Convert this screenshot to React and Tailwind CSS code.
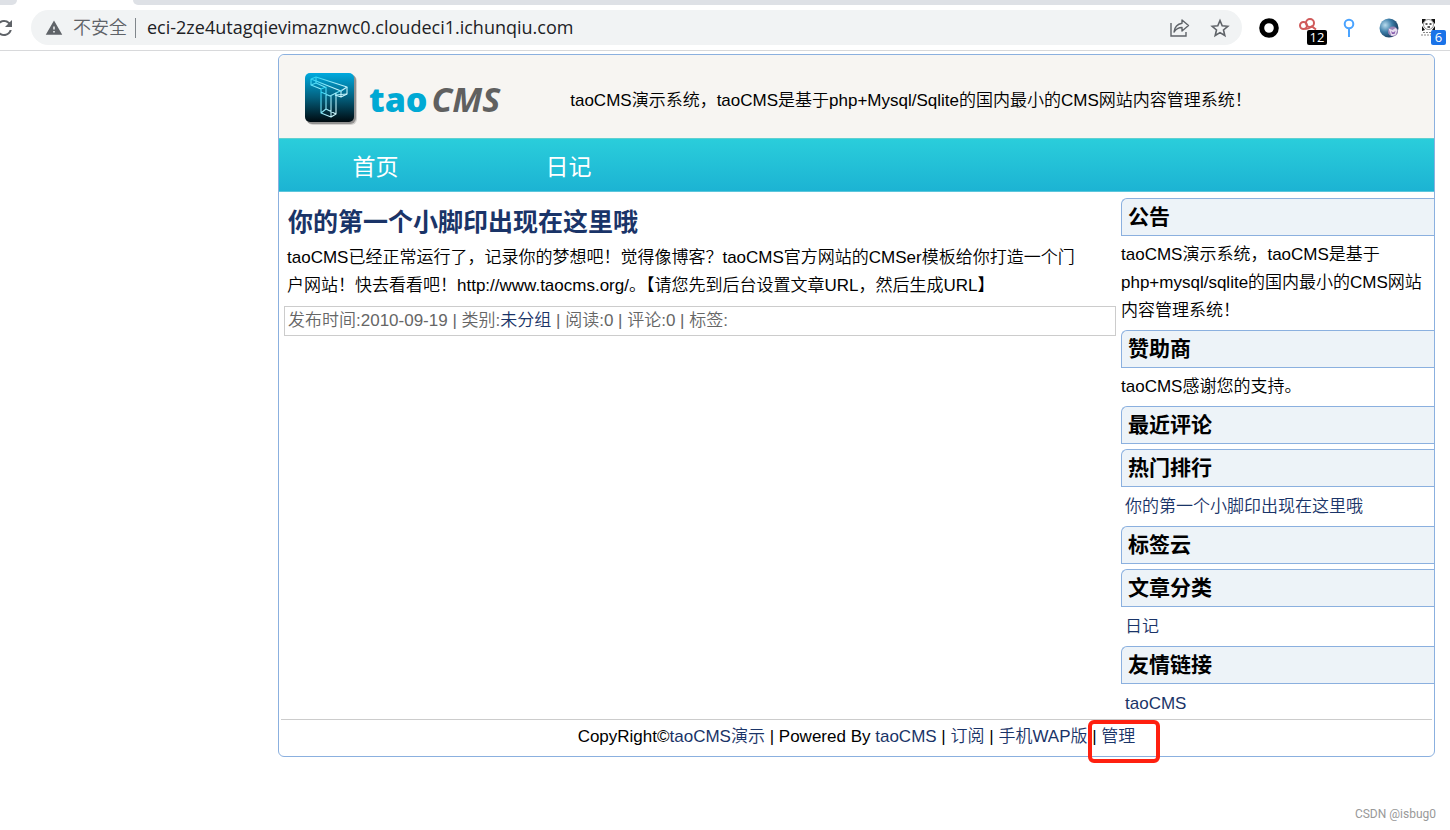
import React from "react";
import { MdRefresh, MdWarning } from "react-icons/md";

const sections = [
  { title: "公告", text: "taoCMS演示系统，taoCMS是基于php+mysql/sqlite的国内最小的CMS网站内容管理系统！" },
  { title: "赞助商", text: "taoCMS感谢您的支持。" },
  { title: "最近评论" },
  { title: "热门排行", links: ["你的第一个小脚印出现在这里哦"] },
  { title: "标签云" },
  { title: "文章分类", links: ["日记"] },
  { title: "友情链接", links: ["taoCMS"] },
];

const Badge = ({ children, className }) => (
  <span
    className={`absolute top-[12px] h-[15px] text-center text-[13px] leading-[15px] font-medium text-white ${className}`}
  >
    {children}
  </span>
);

const ShareIcon = () => (
  <svg width="20" height="20" viewBox="0 0 20 20" fill="none" stroke="#5f6368" strokeWidth="1.4">
    <path d="M1 5v13h15v-4" />
    <path d="M12 2l6.5 5.5L12 13v-3.500C8.500 9.500 6 11 4 14c.6-4.500 3.500-8 8-8.700z" strokeLinejoin="round" />
  </svg>
);

const StarIcon = () => (
  <svg width="20" height="20" viewBox="0 0 20 20" fill="none" stroke="#5f6368" strokeWidth="1.600">
    <path d="M10 2.500l2.200 5.300 5.600.5-4.300 3.700 1.300 5.500-4.800-2.900-4.800 2.900 1.300-5.500-4.300-3.700 5.600-.5z" />
  </svg>
);

const Extensions = () => (
  <div className="flex items-center gap-5 font-['Open_Sans',sans-serif]">
    <button aria-label="Ring" className="size-5">
      <svg width="20" height="20" viewBox="0 0 20 20">
        <circle cx="10" cy="10" r="7.300" fill="#fff" stroke="#000" strokeWidth="5" />
      </svg>
    </button>
    <button aria-label="Links" className="relative size-5">
      <svg width="20" height="20" viewBox="0 0 20 20" fill="none" stroke="#d05a5a" strokeWidth="2">
        <circle cx="4.500" cy="7.500" r="3.500" />
        <circle cx="11" cy="5" r="4" />
        <path d="M6 10.500c3 1 5-1 7-2l4 3" />
      </svg>
      <Badge className="left-2 w-5 rounded-xs bg-black">12</Badge>
    </button>
    <button aria-label="Pin" className="size-5">
      <svg width="20" height="20" viewBox="0 0 20 20" fill="none" stroke="#4aa3ff" strokeWidth="2">
        <circle cx="10" cy="6" r="4.300" />
        <path d="M10 10v9" />
      </svg>
    </button>
    <button aria-label="Globe" className="size-5">
      <svg width="20" height="20" viewBox="0 0 20 20">
        <defs>
          <radialGradient id="globe" cx="0.3" cy="0.35" r="0.8">
            <stop offset="0" stopColor="#b9dcee" />
            <stop offset="0.45" stopColor="#3d7ea8" />
            <stop offset="1" stopColor="#0d2c4c" />
          </radialGradient>
        </defs>
        <circle cx="10" cy="10" r="9.500" fill="url(#globe)" />
        <circle cx="14" cy="13.500" r="5" fill="#9c86b8" />
        <path d="M9.500 10.500l4 1.500 3-2 2 2-2 5-4 1z" fill="#e6dcee" />
        <path d="M12 13l2 1.500 2.500-1.500-1 3h-2.500z" fill="#8a5fb0" />
      </svg>
    </button>
    <button aria-label="Panda" className="relative size-5">
      <svg width="20" height="20" viewBox="0 0 20 20">
        <path d="M3 1h4l-3 4-1 1zM16 1h-4l3 4 1 1zM3 8l3 4-3 1zM16 8l-3 4 3 1z" fill="#111" />
        <circle cx="9.500" cy="6.500" r="5" fill="#fff" stroke="#444" strokeWidth="0.600" />
        <path d="M6.500 6h2M10.500 6h2M8.500 9h2.500" stroke="#222" strokeWidth="1.300" />
        <path d="M4 14.500h9M2 17h12" stroke="#888" strokeDasharray="2 1" strokeWidth="1" />
      </svg>
      <Badge className="left-3 w-[15px] rounded-xs bg-[#1a73e8]">6</Badge>
    </button>
  </div>
);

const BrowserBar = () => (
  <div className="border-b border-[#d8d9db]">
    <div className="flex h-[5px] justify-between">
      <div className="w-[17px] rounded-br-lg bg-[#dee1e6]" />
      <div className="ml-[116px] flex-1 rounded-bl-lg bg-[#dee1e6]" />
    </div>
    <div className="flex h-[45px] items-center pr-[11px]">
      <button aria-label="Reload" className="-ml-2 mr-[15px] text-[#5f6368]">
        <MdRefresh size={24} />
      </button>
      <div className="flex h-[35px] flex-1 items-center rounded-full bg-[#f1f3f4] pl-[14px] pr-3 mr-[17px] text-[18px] font-['Open_Sans','Noto_Sans_CJK_SC',sans-serif]">
        <MdWarning size={18} className="text-[#5f6368]" />
        <span className="ml-[10px] font-[350] text-[#5f6368]">不安全</span>
        <span className="mx-2 h-5 w-px bg-[#80868b]" />
        <input
          aria-label="Address"
          className="min-w-0 flex-1 bg-transparent pl-[3px] text-[#202124] outline-none"
          defaultValue="eci-2ze4utagqievimaznwc0.cloudeci1.ichunqiu.com"
        />
        <button aria-label="Share" className="mr-5">
          <ShareIcon />
        </button>
        <button aria-label="Bookmark">
          <StarIcon />
        </button>
      </div>
      <Extensions />
    </div>
  </div>
);

const Logo = () => (
  <a href="#" className="flex items-center">
    <svg width="54" height="56" viewBox="0 0 54 56">
      <defs>
        <linearGradient id="tile" x1="0" y1="0" x2="0" y2="1">
          <stop offset="0" stopColor="#00aadf" />
          <stop offset="0.5" stopColor="#03607e" />
          <stop offset="1" stopColor="#000a10" />
        </linearGradient>
        <linearGradient id="wire" x1="0" y1="0" x2="1" y2="1">
          <stop offset="0" stopColor="#1fd2f5" />
          <stop offset="0.6" stopColor="#a5ebf8" />
          <stop offset="1" stopColor="#d5f6fb" />
        </linearGradient>
      </defs>
      <rect x="3" y="4" width="50" height="50" rx="6" fill="#000" opacity="0.15" />
      <rect x="2" y="3" width="50" height="50" rx="6" fill="#000" opacity="0.3" />
      <rect x="1" y="2" width="49" height="49" rx="5" fill="url(#tile)" />
      <g fill="none" stroke="url(#wire)" strokeWidth="1.100" strokeLinejoin="round">
        <path d="M7 8L12 6L43 16L37 20L7 8V14L17 18" />
        <path d="M12 6V12L7 14M12 12L21 16M43 16V23L37 26V20M37 26L31 24" />
        <path d="M17 18V42L27 46L32 43V22L26 25L17 21M17 18L22 16V38L32 43M17 42L22 38M27 46V25" />
        <path d="M32 22L38 19M31 24L43 23" />
      </g>
    </svg>
    <span className="ml-[11px] font-['Open_Sans',sans-serif] text-[34px] font-extrabold text-[#00a9d4]">
      tao
    </span>
    <span className="ml-1 font-['Open_Sans',sans-serif] text-[34px] font-bold italic text-[#606060]">
      CMS
    </span>
  </a>
);

const Sidebar = () => (
  <aside className="-mb-1 w-[313px] shrink-0 pt-[6px]">
    {sections.map(({ title, text, links }) => (
      <section key={title}>
        <h2 className="h-[38px] rounded-tl-md border border-r-0 border-[#8bb0df] bg-[#edf3f8] pl-[6px] text-[21px] leading-[36px] font-bold">
          {title}
        </h2>
        {text && <p className="py-[5px]">{text}</p>}
        {links && (
          <ul className="h-[39px] pt-[6px] pl-1">
            {links.map((link) => (
              <li key={link}>
                <a href="#" className="text-[#1a3468]">
                  {link}
                </a>
              </li>
            ))}
          </ul>
        )}
        {!text && !links && <div className="h-[5px]" />}
      </section>
    ))}
  </aside>
);

const Article = () => (
  <main className="min-w-0 flex-1 pt-3 pl-[5px] pr-[5px]">
    <h1 className="pl-1 text-[25px] leading-[36px] font-bold">
      <a href="#" className="text-[#1a3468]">
        你的第一个小脚印出现在这里哦
      </a>
    </h1>
    <p className="mt-1 pl-[3px] pr-7">
      taoCMS已经正常运行了，记录你的梦想吧！觉得像博客？taoCMS官方网站的CMSer模板给你打造一个门户网站！快去看看吧！http://www.taocms.org/。【请您先到后台设置文章URL，然后生成URL】
    </p>
    <div className="mt-[6px] border border-[#ccc] pl-[3px] text-[#666]">
      发布时间:2010-09-19 | 类别:
      <a href="#" className="text-[#1a3468]">
        未分组
      </a>{" "}
      | 阅读:0 | 评论:0 | 标签:
    </div>
  </main>
);

const Footer = () => (
  <footer className="mx-[2px] h-[37px] border-t border-[#ccc] pt-[3px] text-center">
    CopyRight©
    <a href="#" className="text-[#1a3468]">taoCMS演示</a> | Powered By{" "}
    <a href="#" className="text-[#1a3468]">taoCMS</a> |{" "}
    <a href="#" className="text-[#1a3468]">订阅</a> |{" "}
    <a href="#" className="text-[#1a3468]">手机WAP版</a> |{" "}
    <span className="relative">
      <a href="#" className="text-[#1a3468]">管理</a>
      <span className="absolute -left-[13px] -top-[7px] h-[43px] w-[72px] rounded-md border-4 border-[#ff2010]" />
    </span>
  </footer>
);

const App = () => {
  return (
    <div className="bg-white">
      <BrowserBar />
      <div className="mt-[3px] mr-[15px] ml-[278px] rounded-md border border-[#8bb0df] font-['Liberation_Sans','Noto_Sans_CJK_SC',sans-serif] text-[17px] leading-[28px] font-[350] text-black">
        <header className="flex h-[83px] items-center rounded-t-md bg-[#f7f5f2] pt-1 pl-[25px]">
          <Logo />
          <p className="ml-[70px] pt-1">
            taoCMS演示系统，taoCMS是基于php+Mysql/Sqlite的国内最小的CMS网站内容管理系统！
          </p>
        </header>
        <nav className="flex h-[54px] border-y border-t-[#5fd0d0] border-b-[#5cc6dc] bg-linear-to-b from-[#2acddb] to-[#1cb3d3] text-[23px] leading-[56px] font-normal text-white">
          <a href="#" className="w-[193px] text-center">首页</a>
          <a href="#" className="w-[193px] text-center">日记</a>
        </nav>
        <div className="flex">
          <Article />
          <Sidebar />
        </div>
        <Footer />
      </div>
      <div className="mt-[49px] pr-[14px] text-right font-[Roboto,sans-serif] text-[12px] leading-4 text-[#999]">
        CSDN @isbug0
      </div>
    </div>
  );
};

export default App;
